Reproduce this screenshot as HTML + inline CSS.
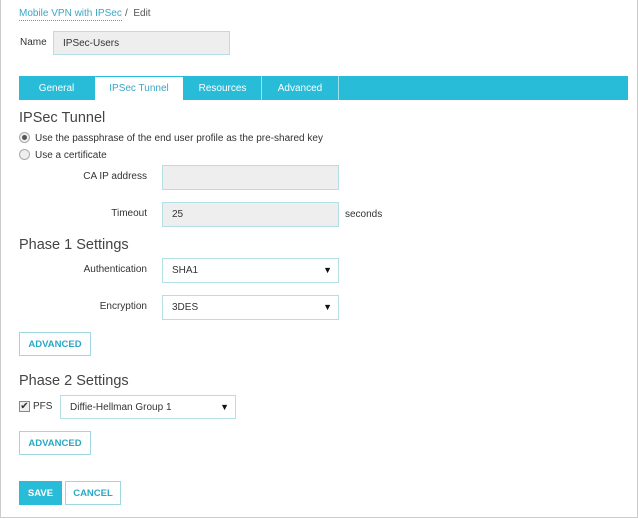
<!DOCTYPE html><html><head><style>
body{margin:0;width:638px;height:519px;background:#fff;font-family:"Liberation Sans",sans-serif;font-size:10px;color:#333;position:relative;overflow:hidden}
.frame{position:absolute;left:0;top:0;width:636px;height:517px;border:1px solid #ccc;border-top:none}
.a{position:absolute;white-space:nowrap;line-height:12px}
.in{position:absolute;background:#eee;border:1px solid #b5dfe6;box-sizing:border-box;padding-left:9px;display:flex;align-items:center;font-size:10px;color:#333}
.sel{position:absolute;background:#fff;border:1px solid #b5dfe6;box-sizing:border-box;padding-left:9px;display:flex;align-items:center;font-size:10px}
.sel:after{content:"▼";position:absolute;right:6px;top:6px;font-size:9px;color:#111}
.h{position:absolute;font-size:14.5px;color:#444;left:19px;line-height:17px}
.btn{position:absolute;border:1px solid #9fd6e0;box-sizing:border-box;color:#29a8c4;font-weight:bold;font-size:9.5px;display:flex;align-items:center;justify-content:center}
.tab{position:absolute;top:76px;height:24px;display:flex;align-items:center;justify-content:center;color:#fff;font-size:10px;background:#29bcd8}
.lab{position:absolute;text-align:right;width:130px;left:17px;line-height:12px}
.rad{position:absolute;left:19px;width:9px;height:9px;border:1px solid #aaa;border-radius:50%;background:#eee}
</style></head><body><div class="frame"></div>
<div class="a" style="left:19px;top:8px;color:#3aa7c4;border-bottom:1px dotted #3aa7c4">Mobile VPN with IPSec</div>
<div class="a" style="left:125px;top:8px;color:#555">/&nbsp; Edit</div>
<div class="a" style="left:20px;top:37px">Name</div>
<div class="in" style="left:53px;top:31px;width:177px;height:24px">IPSec-Users</div>
<div style="position:absolute;left:19px;top:76px;width:609px;height:24px;background:#29bcd8"></div>
<div class="tab" style="left:19px;width:75px">General</div>
<div class="tab" style="left:95px;width:88px;background:#fff;color:#3aa7c4;border-top:1px solid #29bcd8;box-sizing:border-box">IPSec Tunnel</div>
<div class="tab" style="left:184px;width:77px">Resources</div>
<div class="tab" style="left:262px;width:76px">Advanced</div>
<div style="position:absolute;left:338px;top:76px;width:1px;height:24px;background:#9fe0ea"></div>
<div style="position:absolute;left:261px;top:76px;width:1px;height:24px;background:#9fe0ea"></div>
<div class="h" style="top:110px">IPSec Tunnel</div>
<div class="rad" style="top:132px"><div style="width:5px;height:5px;background:#555;border-radius:50%;margin:2px"></div></div>
<div class="a" style="left:35px;top:133px">Use the passphrase of the end user profile as the pre-shared key</div>
<div class="rad" style="top:149px"></div>
<div class="a" style="left:35px;top:150px">Use a certificate</div>
<div class="lab" style="top:171px">CA IP address</div>
<div class="in" style="left:162px;top:165px;width:177px;height:25px"></div>
<div class="lab" style="top:208px">Timeout</div>
<div class="in" style="left:162px;top:202px;width:177px;height:25px">25</div>
<div class="a" style="left:345px;top:209px">seconds</div>
<div class="h" style="top:237px">Phase 1 Settings</div>
<div class="lab" style="top:264px">Authentication</div>
<div class="sel" style="left:162px;top:258px;width:177px;height:25px">SHA1</div>
<div class="lab" style="top:301px">Encryption</div>
<div class="sel" style="left:162px;top:295px;width:177px;height:25px">3DES</div>
<div class="btn" style="left:19px;top:332px;width:72px;height:24px">ADVANCED</div>
<div class="h" style="top:373px">Phase 2 Settings</div>
<div style="position:absolute;left:19px;top:401px;width:9px;height:9px;border:1px solid #888;background:#eee;font-size:10px;line-height:9px;text-align:center">✔</div>
<div class="a" style="left:33px;top:401px">PFS</div>
<div class="sel" style="left:60px;top:395px;width:176px;height:24px">Diffie-Hellman Group 1</div>
<div class="btn" style="left:19px;top:431px;width:72px;height:24px">ADVANCED</div>
<div class="btn" style="left:19px;top:481px;width:43px;height:24px;background:#29bcd8;color:#fff;border-color:#29bcd8">SAVE</div>
<div class="btn" style="left:65px;top:481px;width:56px;height:24px">CANCEL</div>
</body></html>
